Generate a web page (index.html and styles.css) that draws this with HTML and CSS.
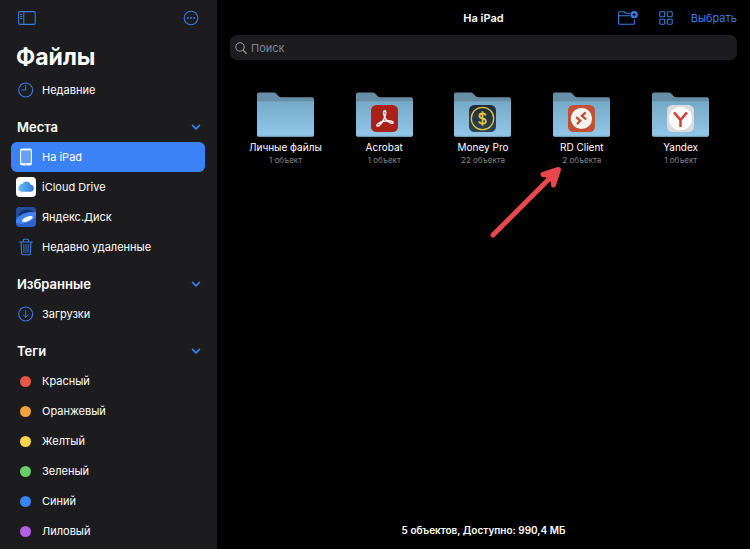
FILE: index.html
```html
<!DOCTYPE html>
<html lang="ru">
<head>
    <meta charset="UTF-8">
    <meta name="viewport" content="width=device-width, initial-scale=1.0">
    <title>Файлы</title>
    <link rel="stylesheet" href="styles.css">
</head>
<body>

    <!-- Shared shapes -->
    <svg class="defs" aria-hidden="true">
        <defs>
            <linearGradient id="folderFront" x1="0" y1="0" x2="0" y2="1">
                <stop offset="0" stop-color="#74a9c8"/>
                <stop offset="1" stop-color="#93c8e8"/>
            </linearGradient>
            <linearGradient id="cloudFill" x1="0" y1="0" x2="1" y2="0">
                <stop offset="0" stop-color="#66bdf5"/>
                <stop offset="1" stop-color="#3478dc"/>
            </linearGradient>
            <linearGradient id="moneyFill" x1="0" y1="0" x2="0" y2="1">
                <stop offset="0" stop-color="#1d2b36"/>
                <stop offset="1" stop-color="#2c4453"/>
            </linearGradient>
            <symbol id="folder" viewBox="0 0 57 45">
                <path d="M0 2.5Q0 0.5 2 0.5H16.5Q18.2 0.5 19.3 1.7L21.5 4Q22.7 5.2 24.5 5.2H55Q57 5.2 57 7.2V12H0Z" fill="#668fa6"/>
                <path d="M0 9.3H57V42.8Q57 44.8 55 44.8H2Q0 44.8 0 42.8Z" fill="url(#folderFront)"/>
                <path d="M1 44.3H56" stroke="#6f9fbb" stroke-width="1"/>
            </symbol>
            <symbol id="chevron" viewBox="0 0 10 10">
                <path d="M1.5 3.4L5 6.9L8.5 3.4" fill="none" stroke="#3b82f6" stroke-width="1.5" stroke-linecap="round" stroke-linejoin="round"/>
            </symbol>
        </defs>
    </svg>

    <div class="app">
        <aside class="sidebar">
            <div class="sidebar-bar">
                <button type="button" class="icon-button" aria-label="Боковое меню">
                    <svg width="18" height="14" viewBox="0 0 18 14" fill="none" stroke="#3b7be0">
                        <rect x="0.6" y="0.6" width="16.6" height="12.8" rx="1.3" stroke-width="1.1"/>
                        <path d="M5.8 0.6V13.4" stroke-width="1"/>
                        <path d="M2 3.5H4.4M2 5.5H4.4M2 7.5H4.4" stroke-width="0.9"/>
                    </svg>
                </button>
                <button type="button" class="icon-button" aria-label="Ещё">
                    <svg width="16" height="16" viewBox="0 0 16 16" fill="none">
                        <circle cx="8" cy="8" r="6.8" stroke="#3b7be0" stroke-width="1.1"/>
                        <circle cx="4.9" cy="8" r="1" fill="#3b7be0"/>
                        <circle cx="8" cy="8" r="1" fill="#3b7be0"/>
                        <circle cx="11.1" cy="8" r="1" fill="#3b7be0"/>
                    </svg>
                </button>
            </div>

            <h1>Файлы</h1>

            <nav>
                <a href="#" class="row">
                    <svg class="row-icon" viewBox="0 0 20 20" fill="none" stroke="#3b7be0">
                        <circle cx="9.7" cy="10" r="7" stroke-width="1.1"/>
                        <path d="M9.7 5V10H5.7" stroke-width="1"/>
                    </svg>
                    Недавние
                </a>

                <h2>Места <button type="button" class="toggle" aria-label="Свернуть места"><svg width="10" height="10"><use href="#chevron"/></svg></button></h2>
                <a href="#" class="row active">
                    <svg class="row-icon" viewBox="0 0 20 20">
                        <rect x="4" y="1.6" width="12" height="16.8" rx="1.8" fill="#f2f6fd"/>
                        <rect x="5.1" y="3.5" width="9.8" height="12.5" fill="#68a0f8"/>
                        <circle cx="10" cy="17.2" r="0.6" fill="#68a0f8"/>
                    </svg>
                    На iPad
                </a>
                <a href="#" class="row">
                    <svg class="row-icon" viewBox="0 0 20 20">
                        <rect width="20" height="20" rx="4" fill="#fff"/>
                        <path d="M5.3 14.7A3.3 3.3 0 0 1 3.7 8.7A2.6 2.6 0 0 1 6.6 6.7A4.4 4.4 0 0 1 14.7 7.8A3.5 3.5 0 0 1 15.1 14.7Z" fill="url(#cloudFill)"/>
                    </svg>
                    iCloud Drive
                </a>
                <a href="#" class="row">
                    <svg class="row-icon" viewBox="0 0 20 20">
                        <rect width="20" height="20" rx="4" fill="#2c62cd"/>
                        <path d="M0 11V4Q0 0 4 0H16Q20 0 20 4V5Q10 3 0 11Z" fill="#244c9d"/>
                        <path d="M3 7Q7 2 14 3L18 4.6Q9 4.6 3 9Z" fill="#142c67"/>
                        <path d="M0 12.6Q4.5 5.4 20 5V7.5Q19.5 14.6 7 16.8Q2.6 17.4 0 15.5Z" fill="#3f83f0"/>
                        <ellipse cx="11.3" cy="12" rx="5.8" ry="2.2" transform="rotate(-24 11.3 12)" fill="#fff"/>
                    </svg>
                    Яндекс.Диск
                </a>
                <a href="#" class="row">
                    <svg class="row-icon" viewBox="0 0 20 20" fill="none" stroke="#3b7be0" stroke-linecap="round" stroke-linejoin="round">
                        <path d="M3.7 5H16.3M7.4 5V3.4Q7.4 2.2 8.6 2.2H11.4Q12.6 2.2 12.6 3.4V5M5 5L5.6 16.4Q5.7 17.8 7.1 17.8H12.9Q14.3 17.8 14.4 16.4L15 5" stroke-width="1.1"/>
                        <path d="M7.8 7.3L8 15.5M10 7.3V15.5M12.2 7.3L12 15.5" stroke-width="0.9"/>
                    </svg>
                    Недавно удаленные
                </a>

                <h2>Избранные <button type="button" class="toggle" aria-label="Свернуть избранные"><svg width="10" height="10"><use href="#chevron"/></svg></button></h2>
                <a href="#" class="row">
                    <svg class="row-icon" viewBox="0 0 20 20" fill="none" stroke="#3b7be0" stroke-linecap="round" stroke-linejoin="round">
                        <circle cx="9.7" cy="10" r="7" stroke-width="1.1"/>
                        <path d="M9.7 6.5V13.2M7.2 10.9L9.7 13.3L12.2 10.9" stroke-width="1"/>
                    </svg>
                    Загрузки
                </a>

                <h2>Теги <button type="button" class="toggle" aria-label="Свернуть теги"><svg width="10" height="10"><use href="#chevron"/></svg></button></h2>
                <a href="#" class="row"><span class="tag red"></span>Красный</a>
                <a href="#" class="row"><span class="tag orange"></span>Оранжевый</a>
                <a href="#" class="row"><span class="tag yellow"></span>Желтый</a>
                <a href="#" class="row"><span class="tag green"></span>Зеленый</a>
                <a href="#" class="row"><span class="tag blue"></span>Синий</a>
                <a href="#" class="row"><span class="tag purple"></span>Лиловый</a>
            </nav>
        </aside>

        <main class="content">
            <header class="toolbar">
                <div class="title">На iPad</div>
                <div class="actions">
                    <button type="button" class="icon-button" aria-label="Новая папка">
                        <svg width="20" height="14" viewBox="0 0 20 14" fill="none" stroke="#3b7be0">
                            <path d="M12.3 2.2H7.6L6.4 0.8H1.9Q0.6 0.8 0.6 2.1V12Q0.6 13.3 1.9 13.3H15.2Q16.5 13.3 16.5 12V8.6M0.6 4.8H12" stroke-width="1.1"/>
                            <circle cx="16.2" cy="3.7" r="3.6" fill="#3b82f6" stroke="none"/>
                            <path d="M16.2 1.7V5.7M14.2 3.7H18.2" stroke="#000" stroke-width="0.9"/>
                        </svg>
                    </button>
                    <button type="button" class="icon-button" aria-label="Вид">
                        <svg width="14" height="14" viewBox="0 0 14 14" fill="none" stroke="#3b7be0" stroke-width="1.1">
                            <rect x="0.8" y="0.8" width="4.9" height="4.9" rx="0.6"/>
                            <rect x="8.3" y="0.8" width="4.9" height="4.9" rx="0.6"/>
                            <rect x="0.8" y="8.3" width="4.9" height="4.9" rx="0.6"/>
                            <rect x="8.3" y="8.3" width="4.9" height="4.9" rx="0.6"/>
                        </svg>
                    </button>
                    <button type="button" class="select-button">Выбрать</button>
                </div>
            </header>

            <label class="search">
                <svg width="12" height="12" viewBox="0 0 12 12" fill="none" stroke="#98989e" stroke-linecap="round">
                    <circle cx="5" cy="5" r="4.2" stroke-width="1.1"/>
                    <path d="M8.1 8.1L11.2 11.2" stroke-width="1.3"/>
                </svg>
                <input type="search" placeholder="Поиск" aria-label="Поиск">
            </label>

            <div class="folders">
                <a href="#" class="folder">
                    <svg class="folder-icon" viewBox="0 0 57 45"><use href="#folder"/></svg>
                    <span class="name">Личные файлы</span>
                    <span class="count">1 объект</span>
                </a>
                <a href="#" class="folder">
                    <svg class="folder-icon" viewBox="0 0 57 45">
                        <use href="#folder"/>
                        <rect x="15" y="13" width="27" height="27" rx="5.5" fill="#aa2117"/>
                        <path d="M28.2 18.8C30.3 17.6 30 22.3 28.4 25.9C26.9 29.4 23.5 34.7 21.5 34.2C19.2 33.3 23.2 30.2 27.7 29.3C31.4 28.4 37.2 28.6 37 30.7C36.5 32.6 31.8 30 29.9 27.2C28 24.4 26.6 19.8 28.2 18.8Z" fill="none" stroke="#fff" stroke-width="1.4" stroke-linejoin="round"/>
                    </svg>
                    <span class="name">Acrobat</span>
                    <span class="count">1 объект</span>
                </a>
                <a href="#" class="folder">
                    <svg class="folder-icon" viewBox="0 0 57 45">
                        <use href="#folder"/>
                        <rect x="15" y="13" width="27" height="27" rx="5.5" fill="url(#moneyFill)"/>
                        <circle cx="28.5" cy="26.5" r="11.2" fill="none" stroke="#e5c13a" stroke-width="1.3"/>
                        <path d="M31.8 23.5Q31.3 21.5 28.5 21.5Q25.5 21.5 25.5 23.9Q25.5 25.8 28.6 26.4Q31.9 27.1 31.9 29.2Q31.9 31.6 28.6 31.6Q25.4 31.6 25 29.3M28.5 19.3V33.8" fill="none" stroke="#e5c13a" stroke-width="1.8"/>
                    </svg>
                    <span class="name">Money Pro</span>
                    <span class="count">22 объекта</span>
                </a>
                <a href="#" class="folder">
                    <svg class="folder-icon" viewBox="0 0 57 45">
                        <use href="#folder"/>
                        <rect x="15" y="13" width="27" height="27" rx="5.5" fill="#c45133"/>
                        <circle cx="28.5" cy="26.5" r="10.6" fill="#f7f4f3"/>
                        <path d="M23.2 25.2L27.3 28.6L24 32.2M32.6 20.4L28.9 24L33.2 27.4" fill="none" stroke="#c14a30" stroke-width="2.2"/>
                    </svg>
                    <span class="name">RD Client</span>
                    <span class="count">2 объекта</span>
                    <svg class="pointer" width="75" height="75" viewBox="0 0 75 75" fill="none" stroke="#e9474d" stroke-width="5" stroke-linecap="round" stroke-linejoin="round" aria-hidden="true">
                        <path d="M4 69L69 4M54 8.5L69.5 3.5L64.5 19"/>
                        <path d="M54 9.5L69 4L64 19L61 12Z" fill="#e9474d" stroke-width="2"/>
                    </svg>
                </a>
                <a href="#" class="folder">
                    <svg class="folder-icon" viewBox="0 0 57 45">
                        <use href="#folder"/>
                        <rect x="15" y="13" width="27" height="27" rx="5.5" fill="#d9dcde"/>
                        <circle cx="28.5" cy="26.5" r="11.6" fill="#fff"/>
                        <path d="M22 20.4L28.5 28L35 20.4M28.5 27.5V35" fill="none" stroke="#df3b35" stroke-width="2.5"/>
                    </svg>
                    <span class="name">Yandex</span>
                    <span class="count">1 объект</span>
                </a>
            </div>

            <footer class="status">5 объектов, Доступно: 990,4 МБ</footer>
        </main>
    </div>

</body>
</html>
```

FILE: styles.css
```css
* {
    box-sizing: border-box;
}

body {
    margin: 0;
    background-color: #000;
    color: #fff;
    font-family: Inter, "Liberation Sans", sans-serif;
    font-size: 11px;
}

a {
    color: inherit;
    text-decoration: none;
}

button {
    padding: 0;
    border: none;
    background: none;
    font: inherit;
    cursor: pointer;
}

svg {
    display: block;
}

.defs {
    position: absolute;
    width: 0;
    height: 0;
}

.app {
    display: grid;
    grid-template-columns: 217fr 533fr;
    height: 100vh;
    overflow: hidden;
}

/* Sidebar */
.sidebar {
    padding: 0 12px 0 11px;
    background-color: #1c1c1e;
    overflow: hidden;
}

.sidebar-bar {
    display: flex;
    justify-content: space-between;
    align-items: center;
    height: 36px;
    padding: 0 6px 0 7px;
}

h1 {
    margin: 0;
    padding: 6px 5px 3px;
    font-size: 23px;
    line-height: 30px;
    font-weight: 700;
}

h2 {
    display: flex;
    justify-content: space-between;
    align-items: center;
    height: 30px;
    margin: 7px 0 0;
    padding: 0 4px 0 6px;
    font-size: 13px;
    font-weight: 600;
}

.row {
    display: flex;
    align-items: center;
    gap: 6px;
    height: 30px;
    padding: 0 5px;
    border-radius: 6px;
}

.row.active {
    background-color: #3b82f7;
}

.row-icon {
    width: 20px;
    height: 20px;
}

.tag {
    width: 11px;
    height: 11px;
    margin: 0 5px 0 4px;
    border-radius: 50%;
}

.red { background-color: #ec5545; }
.orange { background-color: #f2a33c; }
.yellow { background-color: #f9d74a; }
.green { background-color: #67ce67; }
.blue { background-color: #3b82f7; }
.purple { background-color: #b25fea; }

/* Main area */
.content {
    display: flex;
    flex-direction: column;
    min-width: 0;
}

.toolbar {
    display: grid;
    grid-template-columns: 1fr auto 1fr;
    align-items: center;
    height: 35px;
    padding: 0 13px;
}

.title {
    grid-column: 2;
    font-weight: 600;
}

.actions {
    display: flex;
    justify-content: flex-end;
    align-items: center;
    gap: 21px;
}

.select-button {
    color: #3b7be0;
    margin-left: -3px;
}

.search {
    display: flex;
    align-items: center;
    gap: 4px;
    height: 25px;
    margin: 0 13px;
    padding: 0 5px;
    border-radius: 7px;
    background-color: #1c1c1e;
}

.search input {
    flex: 1;
    min-width: 0;
    padding: 0;
    border: none;
    outline: none;
    background: none;
    color: #fff;
    font: inherit;
}

.search input::placeholder {
    color: #85858b;
}

.folders {
    display: grid;
    grid-template-columns: repeat(5, 1fr);
    padding: 32px 20px 0 19px;
}

.folder {
    position: relative;
    display: flex;
    flex-direction: column;
    align-items: center;
    text-align: center;
}

.folder-icon {
    width: 57px;
    height: 45px;
}

.name {
    margin-top: 3px;
    font-size: 10px;
    line-height: 14px;
}

.count {
    font-size: 8px;
    line-height: 12px;
    color: #85858b;
}

/* Arrow lying over the free space below the folder */
.pointer {
    position: absolute;
    top: 74px;
    left: -43px;
}

.status {
    margin-top: auto;
    padding-bottom: 11px;
    font-size: 10px;
    line-height: 15px;
    font-weight: 600;
    text-align: center;
}
```
